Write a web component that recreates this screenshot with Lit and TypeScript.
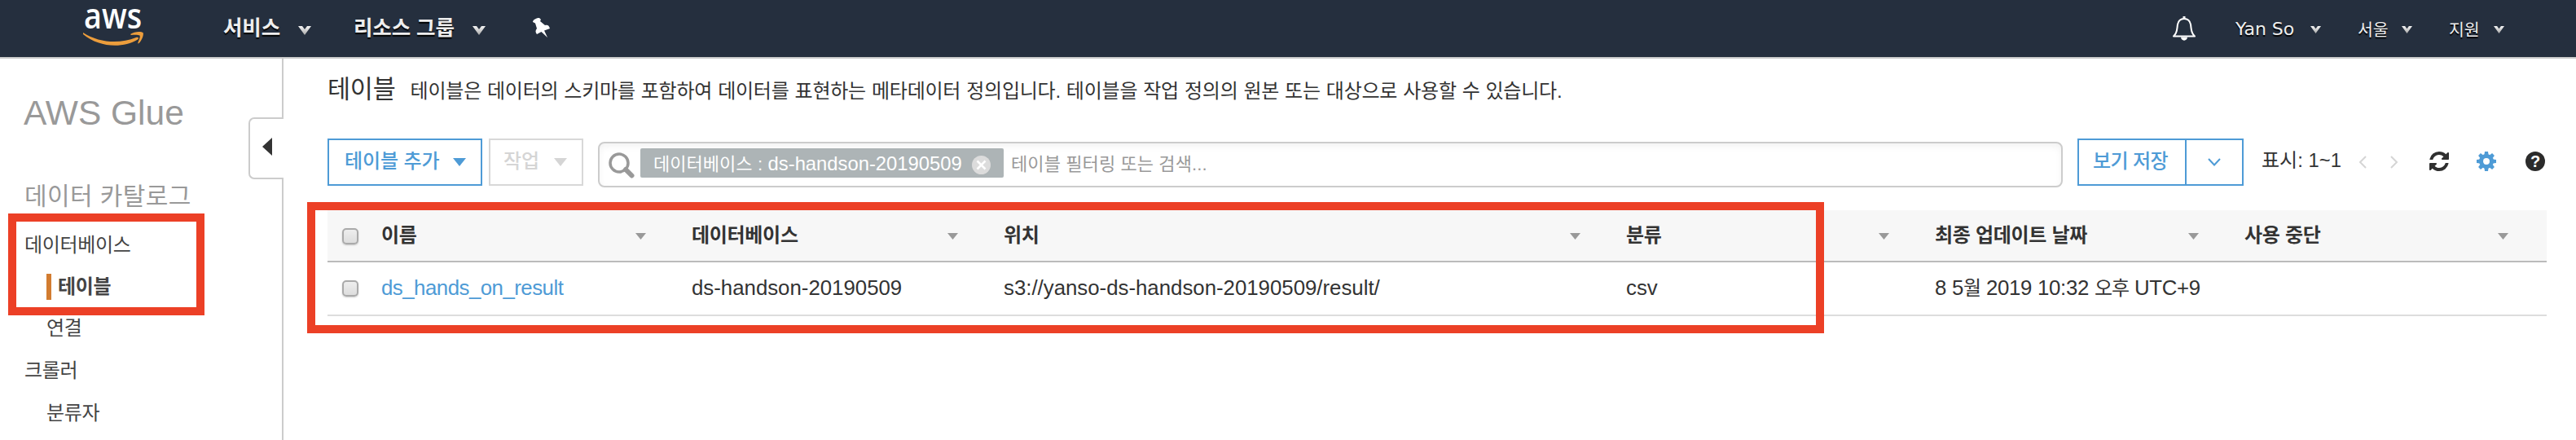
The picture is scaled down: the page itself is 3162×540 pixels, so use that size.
import { LitElement, html, css, svg } from "lit";
import { customElement } from "lit/decorators.js";

const chevron = (cls: string) => html`<svg class=${cls} viewBox="0 0 16 10" preserveAspectRatio="none">
  <defs><linearGradient id="g" x1="0" y1="0" x2="0" y2="1"><stop offset="0" stop-color="#f4f4f4" /><stop offset="1" stop-color="#a8a8a8" /></linearGradient></defs>
  <path d="M0 0H5L8 3.6L11 0H16L8 10Z" fill="url(#g)" />
</svg>`;

const triangle = (cls: string) => html`<svg class=${cls} viewBox="0 0 16 10" preserveAspectRatio="none"><path d="M0 0H16L8 10Z" fill="currentColor" /></svg>`;

@customElement("console-header")
class ConsoleHeader extends LitElement {
  static styles = css`
    :host { display: flex; align-items: flex-start; box-sizing: border-box; height: 72px; background: #252f3e; border-bottom: 2px solid #ccc; color: #eee;
      font-family: "Liberation Sans", "Noto Sans CJK KR", sans-serif; text-shadow: 0 2px 1px #000; white-space: nowrap; }
    .logo { width: 76px; height: 60px; margin-left: 101px; flex: none; }
    .word { font: 600 43px "Open Sans", sans-serif; text-shadow: none; }
    .menu { display: flex; font-size: 25.5px; font-weight: 700; line-height: 68px; letter-spacing: -0.1px; }
    .service { margin-left: 97px; width: 92px; }
    .group { margin-left: 52px; width: 146px; }
    .arrow { width: 16px; height: 11px; margin-top: 32px; flex: none; }
    .small { width: 13px; height: 9px; margin-top: 32px; flex: none; }
    .pin { width: 22px; height: 24px; margin: 22px 0 0 57px; }
    .space { flex: 1; }
    .bell { width: 30px; height: 32px; margin-top: 20px; }
    .user { font: 22px/72px "DejaVu Sans", sans-serif; margin-left: 48px; width: 92px; }
    .item { font-size: 20.5px; line-height: 73px; }
    .region { margin-left: 45px; width: 54px; }
    .support { margin-left: 45px; width: 55px; }
    .end { width: 88px; }
  `;
  render() {
    return html`
      <svg class="logo" viewBox="0 0 76 60">
        <text class="word" x="2" y="35" fill="#fff" textLength="71" lengthAdjust="spacingAndGlyphs">aws</text>
        <path d="M1 40C21 53 46 54 66 46C69 45 70 47 68 48.500C49 60 20 58 1 42Z" fill="#ec9d3c" />
        <path d="M59 42C64 38 73 38.500 74.500 40C76 42 73 50 69.500 53C68.500 54 68 53 68.500 52C70 48 71.500 45 70.500 43.500C69 42.500 64 42.500 60 43Z" fill="#ec9d3c" />
      </svg>
      <div class="menu service">서비스</div>${chevron("arrow")}
      <div class="menu group">리소스 그룹</div>${chevron("arrow")}
      <svg class="pin" viewBox="0 0 22 24"><path d="M1 5C1 2 6 0 9 0L11 2L10 4L16 9C19 8 21 9 22 13L15 15.500L19 24L11.500 17L6 20C4 18 4 15 6 13L4 6.500Z" fill="#fff" /></svg>
      <div class="space"></div>
      <svg class="bell" viewBox="0 0 30 32"><path d="M2 24.500C7 20 6 16 7 10C8 5 11 3 15 3S22 5 23 10C24 16 23 20 28 24.500Z" fill="none" stroke="#fff" stroke-width="2" stroke-linejoin="round" /><path d="M15 0V3" stroke="#fff" stroke-width="3" /><path d="M11 25.500H19C19 31 11 31 11 25.500Z" fill="#fff" /></svg>
      <div class="user">Yan So</div>${chevron("small")}
      <div class="item region">서울</div>${chevron("small")}
      <div class="item support">지원</div>${chevron("small")}
      <div class="end"></div>`;
  }
}

@customElement("side-nav")
class SideNav extends LitElement {
  static styles = css`
    :host { display: flex; box-sizing: border-box; width: 348px; height: 468px; flex: none; border-right: 2px solid #ccc; color: #444;
      font-family: "Liberation Sans", "Noto Sans CJK KR", sans-serif; font-size: 24px; letter-spacing: -0.35px; white-space: nowrap; }
    .list { flex: 1; }
    .product { margin: 42px 0 0 29px; font-size: 42.5px; line-height: 50px; letter-spacing: 0; color: #999; }
    .section { margin: 57px 0 0 30px; font-size: 30px; line-height: 40px; letter-spacing: 0.4px; color: #999; padding-bottom: 14px; }
    .entry { height: 52px; line-height: 52px; padding-left: 30px; }
    .sub { padding-left: 57px; }
    .current { display: flex; align-items: center; font-weight: 700; gap: 8px; height: 50px; }
    .current::before { content: ""; width: 6px; height: 32px; background: #d27c30; }
    .handle { box-sizing: border-box; width: 43px; height: 76px; margin: 72px -2px 0 0; background: #fff; border: 2px solid #ccc; border-right: 0; border-radius: 7px 0 0 7px; padding: 23px 0 0 15px; }
    .back { display: block; width: 12px; height: 22px; }
  `;
  render() {
    return html`<div class="list">
        <div class="product">AWS Glue</div>
        <div class="section">데이터 카탈로그</div>
        <div class="entry">데이터베이스</div>
        <div class="entry sub current">테이블</div>
        <div class="entry sub">연결</div>
        <div class="entry">크롤러</div>
        <div class="entry sub">분류자</div>
      </div>
      <div class="handle"><svg class="back" viewBox="0 0 12 22"><path d="M12 0V22L0 11Z" fill="#333" /></svg></div>`;
  }
}

const teeth = [0, 45, 90, 135, 180, 225, 270, 315];

@customElement("table-toolbar")
class TableToolbar extends LitElement {
  static styles = css`
    :host { display: flex; height: 60px; color: #333; font-family: "Liberation Sans", "Noto Sans CJK KR", sans-serif; font-size: 24px; white-space: nowrap; }
    .button { display: flex; box-sizing: border-box; height: 58px; border: 2px solid #4e9bd6; color: #4e9bd6; line-height: 51px; font-weight: 500; letter-spacing: -0.1px; }
    .add { width: 190px; padding-left: 19px; }
    .add .label { width: 133px; }
    .action { width: 116px; margin-left: 8px; padding-left: 16px; border-color: #d8d8d8; color: #d5d5d5; }
    .action .label { width: 62px; }
    .tri { width: 16px; height: 10px; margin-top: 22px; }
    .search { display: flex; box-sizing: border-box; width: 1798px; height: 56px; margin: 4px 0 0 18px; border: 2px solid #ccc; border-radius: 8px; padding: 6px 0 0 11px; box-shadow: inset 0 4px 8px #0000000d; }
    .glass { width: 32px; height: 32px; margin-top: 5px; }
    .chip { display: flex; box-sizing: border-box; width: 446px; height: 36px; margin-left: 7px; padding-left: 16px; background: #adb4b6; border-radius: 2px; color: #fff; font-size: 22px; line-height: 39px; }
    .query { width: 391px; font-weight: 400; word-spacing: 0.4px; }
    .latin { font-size: 23.8px; line-height: 1; font-weight: 400; letter-spacing: 0; }
    .remove { width: 23px; height: 23px; margin-top: 9px; }
    .hint { margin-left: 9px; font-size: 22px; line-height: 39px; letter-spacing: 0.1px; color: #999; }
    .save { width: 204px; margin-left: 18px; padding-left: 17px; }
    .save .label { width: 113px; letter-spacing: -0.6px; border-right: 2px solid #4e9bd6; }
    .down { width: 16px; height: 10px; margin: 22px 0 0 26px; }
    .range { width: 119px; margin-left: 22px; line-height: 54px; }
    .prev, .next { width: 10px; height: 16px; margin-top: 21px; }
    .next { margin-left: 29px; }
    .tool { width: 24px; height: 24px; margin-top: 16px; }
    .refresh { margin-left: 38px; }
    .gear { margin-left: 34px; }
    .help { margin-left: 36px; }
    .mark { font: 700 20px "Liberation Sans", sans-serif; }
  `;
  render() {
    return html`
      <div class="button add"><span class="label">테이블 추가</span>${triangle("tri")}</div>
      <div class="button action"><span class="label">작업</span>${triangle("tri")}</div>
      <div class="search">
        <svg class="glass" viewBox="0 0 32 32"><circle cx="13" cy="13" r="11" fill="none" stroke="#999" stroke-width="3.500" /><path d="M21 21L28.500 28.500" stroke="#999" stroke-width="6" stroke-linecap="round" /></svg>
        <div class="chip"><span class="query">데이터베이스 : <span class="latin">ds-handson-20190509</span></span>
          <svg class="remove" viewBox="0 0 23 23"><circle cx="11.500" cy="11.500" r="11.500" fill="#dcdcdc" /><path d="M6.500 6.500L16.500 16.500M16.500 6.500L6.500 16.500" stroke="#fff" stroke-width="2.500" /></svg>
        </div>
        <span class="hint">테이블 필터링 또는 검색...</span>
      </div>
      <div class="button save"><span class="label">보기 저장</span>
        <svg class="down" viewBox="0 0 16 10"><path d="M1 1L8 8.500L15 1" fill="none" stroke="#4e9bd6" stroke-width="2" /></svg></div>
      <div class="range">표시: <span class="latin">1~1</span></div>
      <svg class="prev" viewBox="0 0 10 16"><path d="M9 1L2 8L9 15" fill="none" stroke="#d5d5d5" stroke-width="2" /></svg>
      <svg class="next" viewBox="0 0 10 16"><path d="M1 1L8 8L1 15" fill="none" stroke="#d5d5d5" stroke-width="2" /></svg>
      <svg class="tool refresh" viewBox="0 0 1536 1536"><path fill="#303030" d="M1511 928q0 5-1 7-64 268-268 434.500T764 1536q-146 0-282.500-55T238 1324l-129 129q-19 19-45 19t-45-19-19-45V960q0-26 19-45t45-19h448q26 0 45 19t19 45-19 45l-137 137q71 66 161 102t187 36q134 0 250-65t186-179q11-17 53-117 8-23 30-23h192q13 0 22.500 9.500t9.500 22.500zM1536 128v448q0 26-19 45t-45 19h-448q-26 0-45-19t-19-45 19-45l138-138Q969 256 768 256q-134 0-250 65T332 500q-11 17-53 117-8 23-30 23H50q-13 0-22.500-9.500T18 608v-7q65-268 270-434.500T768 0q146 0 284 55.500T1297 212l130-129q19-19 45-19t45 19 19 45z" /></svg>
      <svg class="tool gear" viewBox="-12 -12 24 24"><circle r="6.500" fill="none" stroke="#4e9bd6" stroke-width="5" />${teeth.map((a) => svg`<path d="M-2.600 -8L-2 -12H2L2.600 -8Z" fill="#4e9bd6" transform=${`rotate(${a})`} />`)}</svg>
      <svg class="tool help" viewBox="0 0 24 24"><circle cx="12" cy="12" r="12" fill="#2b2b2b" /><text class="mark" x="12" y="19.200" text-anchor="middle" fill="#fff">?</text></svg>`;
  }
}

const columns = ["이름", "데이터베이스", "위치", "분류", "최종 업데이트 날짜", "사용 중단"];

@customElement("glue-tables")
class GlueTables extends LitElement {
  static styles = css`
    :host { display: block; color: #333; font-family: "Liberation Sans", "Noto Sans CJK KR", sans-serif; font-size: 24px; white-space: nowrap; }
    .row { display: grid; grid-template-columns: 66px 381px 383px 764px 379px 380px 371px; box-sizing: border-box; height: 66px; line-height: 62px; border-bottom: 2px solid #ddd; }
    .head { height: 64px; background: #f7f7f7; border-bottom-color: #bbb; font-weight: 700; letter-spacing: -0.3px; line-height: 62px; }
    .cell { display: flex; justify-content: space-between; padding-right: 56px; }
    .cell:last-child { padding-right: 47px; }
    .sort { width: 13px; height: 8px; margin-top: 28px; color: #999; }
    .check { box-sizing: border-box; width: 20px; height: 20px; margin: 22px 0 0 18px; border: 2px solid #aaa; border-radius: 5px; background: linear-gradient(#eee, #ddd); box-shadow: 0 1px 2px #0003; }
    .text { font-size: 25.8px; }
    .ko { font-size: 24px; line-height: 1; letter-spacing: -1px; }
    .link { color: #4e9bd6; letter-spacing: -0.5px; }
    .date { letter-spacing: -0.3px; }
  `;
  render() {
    return html`
      <div class="row head"><span class="check"></span>${columns.map((c) => html`<div class="cell"><span>${c}</span>${triangle("sort")}</div>`)}</div>
      <div class="row"><span class="check"></span>
        <span class="text link">ds_hands_on_result</span>
        <span class="text">ds-handson-20190509</span>
        <span class="text">s3://yanso-ds-handson-20190509/result/</span>
        <span class="text">csv</span>
        <span class="text date">8 5<span class="ko">월</span> 2019 10:32 <span class="ko">오후</span> UTC+9</span>
        <span></span>
      </div>`;
  }
}

@customElement("app-root")
class AppRoot extends LitElement {
  static styles = css`
    :host { display: block; position: relative; height: 540px; overflow: hidden; background: #fff; color: #333; font-family: "Liberation Sans", "Noto Sans CJK KR", sans-serif; }
    .body { display: flex; }
    .main { flex: 1; padding: 17px 36px 0 54px; }
    .heading { display: flex; align-items: baseline; height: 81px; line-height: 40px; white-space: nowrap; }
    .title { font-size: 30.5px; letter-spacing: -0.2px; }
    .about { margin-left: 18px; font-size: 24px; letter-spacing: -0.22px; word-spacing: 0.5px; }
    .table { display: block; margin-top: 28px; }
    .mark { position: absolute; box-sizing: border-box; border: 10px solid #ec4026; }
    .nav-mark { left: 10px; top: 262px; width: 241px; height: 125px; }
    .table-mark { left: 377px; top: 248px; width: 1862px; height: 161px; }
  `;
  render() {
    return html`
      <console-header></console-header>
      <div class="body">
        <side-nav></side-nav>
        <div class="main">
          <div class="heading"><span class="title">테이블</span><span class="about">테이블은 데이터의 스키마를 포함하여 데이터를 표현하는 메타데이터 정의입니다. 테이블을 작업 정의의 원본 또는 대상으로 사용할 수 있습니다.</span></div>
          <table-toolbar></table-toolbar>
          <glue-tables class="table"></glue-tables>
        </div>
      </div>
      <div class="mark nav-mark"></div>
      <div class="mark table-mark"></div>`;
  }
}
